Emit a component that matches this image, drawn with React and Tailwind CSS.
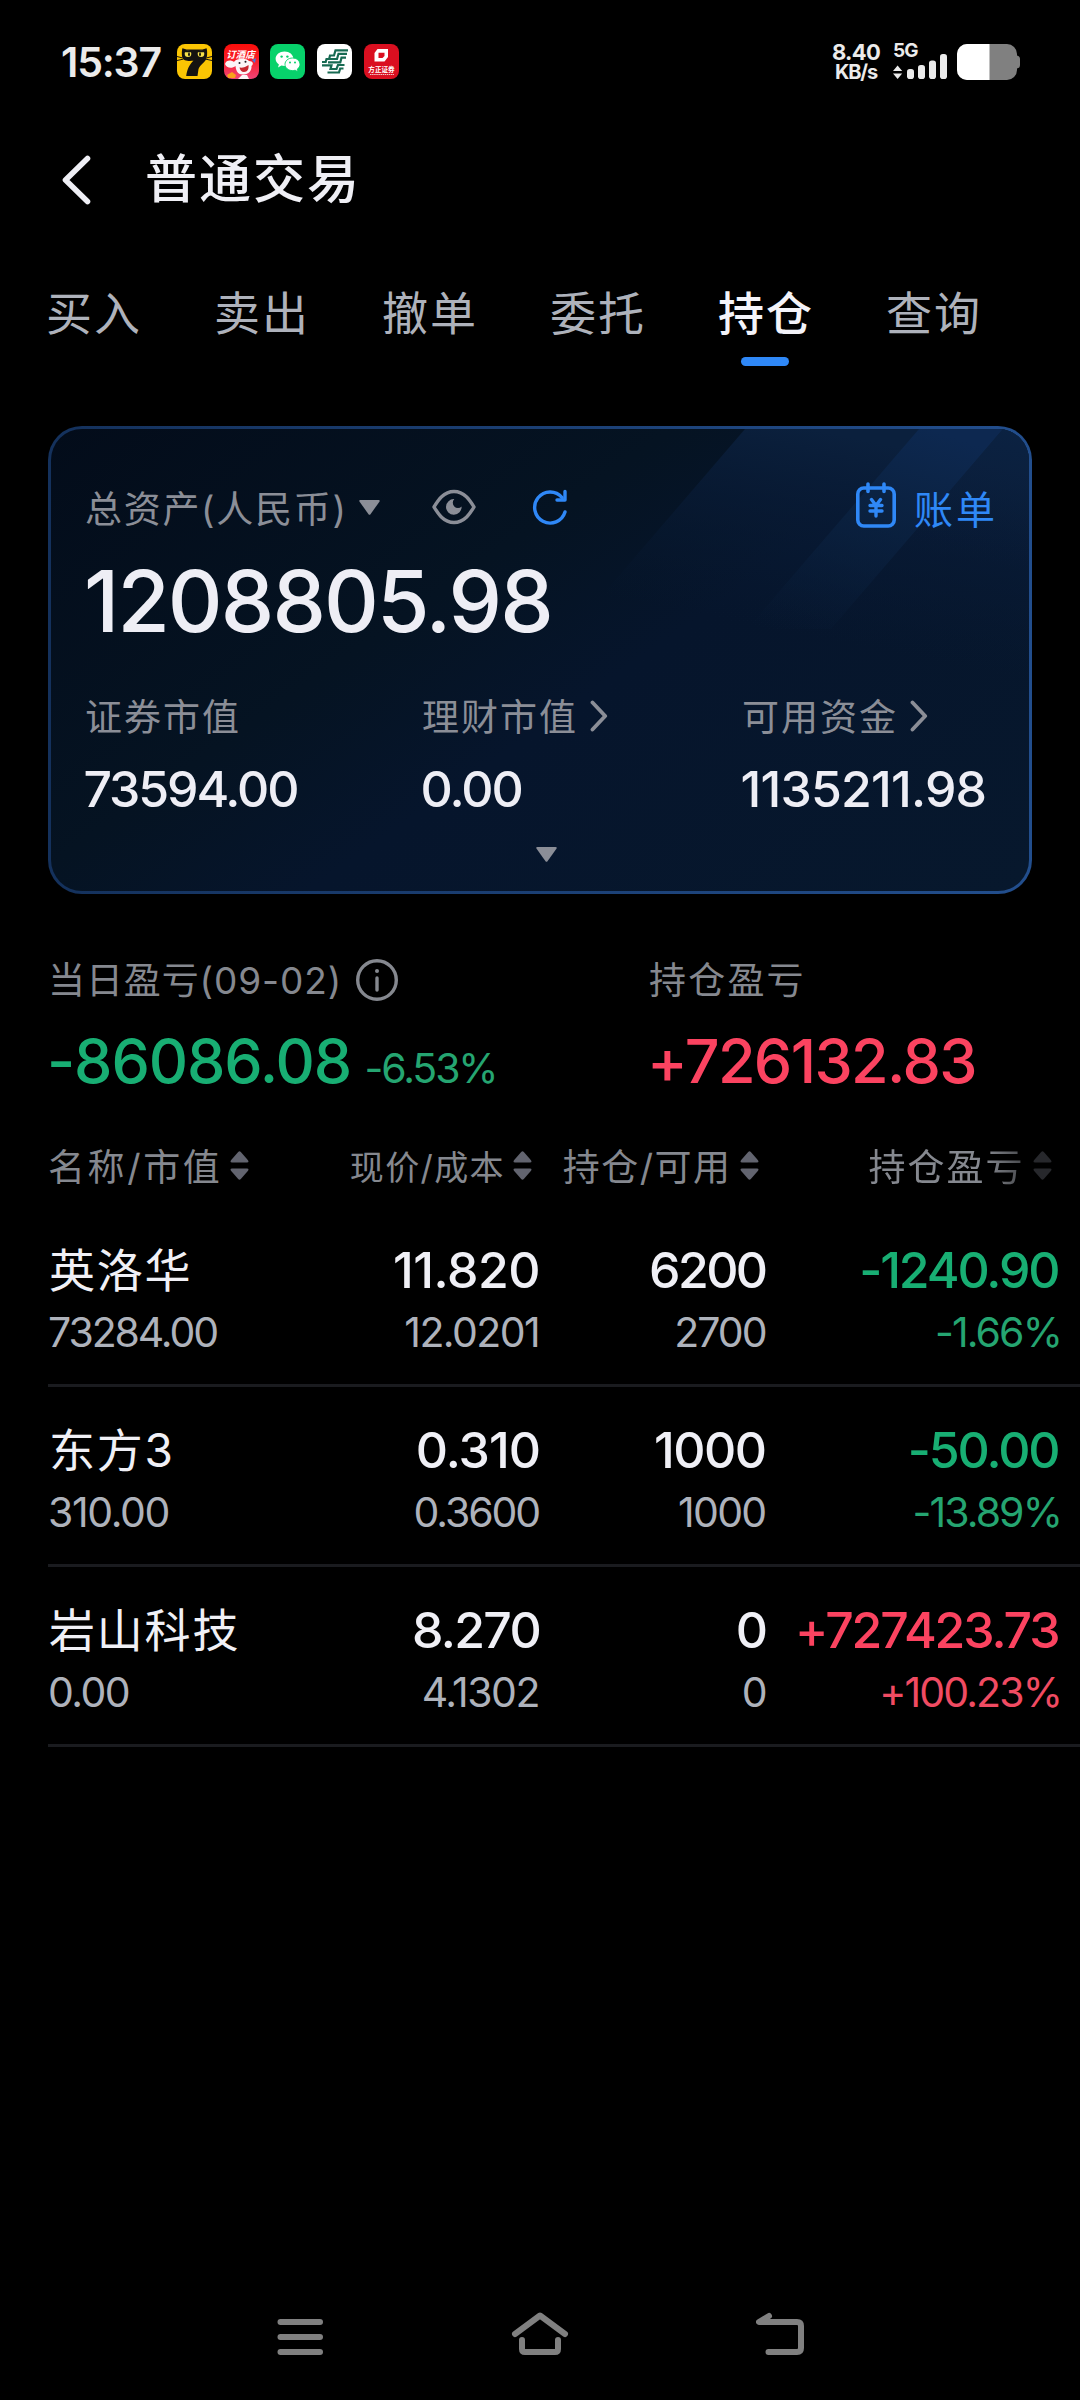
import React from "react";

/* ---------- status bar ---------- */

function CatAppIcon() {
  return (
    <svg width="35" height="35" viewBox="0 0 35 35">
      <rect width="35" height="35" rx="8" fill="#fbc503" />
      <path d="M5.200 13.500C4.600 9.500 4.800 6.500 5.400 4.200L9.500 5.500H25.500L29.600 4.200C30.200 6.500 30.400 9.500 29.800 13.500C28.500 18.500 23.500 20 21.500 25L20.500 32H9.200C10 26 12.500 20 16.500 16.800C11 17.200 6.200 17 5.200 13.500Z" fill="#141210" />
      <path d="M0 12.500L5 13.800M0 16.500L6 15.200M35 12.500L30 13.800M35 16.500L29 15.200" stroke="#141210" strokeWidth="1" />
      <circle cx="11" cy="9.800" r="3.300" fill="#f5e04a" />
      <circle cx="24" cy="9.800" r="3.300" fill="#f5e04a" />
      <path d="M7 7.200H14.500M20.500 7.200H28" stroke="#141210" strokeWidth="2" />
      <ellipse cx="12" cy="10.300" rx="0.900" ry="2" fill="#141210" />
      <ellipse cx="23" cy="10.300" rx="0.900" ry="2" fill="#141210" />
    </svg>
  );
}

function HotelAppIcon() {
  return (
    <svg width="35" height="35" viewBox="0 0 35 35">
      <defs>
        <linearGradient id="hotel" x1="0" y1="0" x2="0" y2="1">
          <stop offset="0" stopColor="#fb0d0a" />
          <stop offset="0.5" stopColor="#f8202c" />
          <stop offset="1" stopColor="#f0457a" />
        </linearGradient>
        <clipPath id="hotelClip"><rect width="35" height="35" rx="8" /></clipPath>
      </defs>
      <g clipPath="url(#hotelClip)">
        <rect width="35" height="35" fill="url(#hotel)" />
        <path d="M1 20C2 16 7 15.500 10 18C12 14.500 22 13.500 25 17C29 17 30 20 27.500 22C28 27 24 31 19 30.500C14 30.500 12 27 11.500 22C8 25 2 24 1 20Z" fill="#fbf5f7" />
        <path d="M15.500 23.500C18.500 24 22 23 24.500 21C25 25 23.500 28 20 28C17.500 28 16 26 15.500 23.500Z" fill="#c8262f" />
        <circle cx="15.500" cy="19" r="1" fill="#221f25" />
        <circle cx="21.500" cy="17.800" r="1" fill="#221f25" />
        <path d="M28 16L32 14L31 19Z" fill="#4e79d8" />
        <path d="M3 31L8 28L12 31L11 34H4Z" fill="#f8a21d" />
        <path d="M14 35L18 31H23L25 35Z" fill="#fbf5f7" />
        <text x="16.500" y="13.500" textAnchor="middle" fontSize="9.500" fontWeight="700" fontStyle="italic" fontFamily="Noto Sans CJK SC" fill="#fff">订酒店</text>
      </g>
    </svg>
  );
}

function WeChatIcon() {
  return (
    <svg width="35" height="35" viewBox="0 0 35 35">
      <rect width="35" height="35" rx="8" fill="#07d26b" />
      <path d="M14.500 7.500C9.600 7.500 5.600 10.700 5.600 14.800C5.600 17.100 6.900 19.100 8.900 20.500L8 23.500L11.400 21.600C12.400 21.900 13.400 22 14.500 22C19.400 22 23.400 18.900 23.400 14.800C23.400 10.700 19.400 7.500 14.500 7.500Z" fill="#fff" />
      <path d="M22.500 14C18.300 14 15 16.800 15 20.300C15 23.800 18.300 26.600 22.500 26.600C23.400 26.600 24.300 26.500 25.100 26.200L28 27.800L27.300 25.100C29 24 30 22.300 30 20.300C30 16.800 26.700 14 22.500 14Z" fill="#fff" stroke="#07d26b" strokeWidth="0.900" />
      <circle cx="11.600" cy="12.600" r="1.200" fill="#07d26b" />
      <circle cx="17.400" cy="12.600" r="1.200" fill="#07d26b" />
      <circle cx="20" cy="18.600" r="1" fill="#07d26b" />
      <circle cx="25" cy="18.600" r="1" fill="#07d26b" />
    </svg>
  );
}

function PostalBankIcon() {
  return (
    <svg width="35" height="35" viewBox="0 0 35 35">
      <rect width="35" height="35" rx="8" fill="#fff" />
      <g fill="none" stroke="#176a52" strokeWidth="2.200">
        <path d="M31 6.300H18.500L17 11.500H13L12 15.500" />
        <path d="M30 9.800H21.500L20 15H9.500L8.700 18H5" />
        <path d="M29 13.700H24.500L23.300 18.400H11" />
        <path d="M5 21.300H14.500L13.500 25H19.500L21 21H27.500" />
        <path d="M10.500 28.500H22L23.200 24.500H26.500" />
      </g>
    </svg>
  );
}

function FounderIcon() {
  return (
    <svg width="35" height="35" viewBox="0 0 35 35">
      <rect width="35" height="35" rx="8" fill="#da0f20" />
      <path d="M13.500 5H24V13L20.500 17.500H10.500V9Z" fill="#fff" />
      <path d="M14.500 8.800H20.500V12L18.500 14H14.500Z" fill="#da0f20" />
      <text x="17.500" y="28" textAnchor="middle" fontSize="6.600" fontWeight="700" fontFamily="Noto Sans CJK SC" fill="#fff">方正证券</text>
      <path d="M6 30.500H30" stroke="#fff" strokeWidth="1" strokeDasharray="1.500 0.600" opacity="0.75" />
    </svg>
  );
}

function StatusBar() {
  return (
    <div className="flex h-[123px] shrink-0 items-center pl-[61px] pr-[60px] text-[#ebebeb]">
      <div className="w-[116px] text-[41px] font-semibold leading-[50px] tracking-[-1.2px]">15:37</div>
      <div className="flex gap-[11.7px]">
        <CatAppIcon />
        <HotelAppIcon />
        <WeChatIcon />
        <PostalBankIcon />
        <FounderIcon />
      </div>
      <div className="ml-auto w-[50px] whitespace-nowrap text-center font-bold leading-[20px]">
        <div className="text-[22px] tracking-[-0.7px]">8.40</div>
        <div className="text-[20px] tracking-[-1.1px]">KB/s</div>
      </div>
      <div className="ml-[12px] h-[35px] w-[55px]">
        <div className="h-[14px] text-[19px] font-bold leading-[14px] tracking-[-1px]">5G</div>
        <svg className="-mt-[4px]" width="55" height="25" viewBox="0 0 55 25" fill="#ebebeb">
          <path d="M0 17L4.600 11.500L9.200 17ZM0 19.500H9.200L4.600 25Z" />
          <rect x="14" y="15" width="7" height="10" rx="2.800" />
          <rect x="25" y="11" width="7" height="14" rx="2.800" />
          <rect x="36" y="6.500" width="7" height="18.500" rx="2.800" />
          <rect x="47" y="0" width="7" height="25" rx="2.800" />
        </svg>
      </div>
      <svg className="ml-[9px]" width="63" height="36" viewBox="0 0 63 36">
        <path d="M10 0H50A10 10 0 0 1 60 10V11.500Q63 12 63 15V21Q63 24 60 24.500V26A10 10 0 0 1 50 36H10A10 10 0 0 1 0 26V10A10 10 0 0 1 10 0Z" fill="#808080" />
        <path d="M10 0H32.500V36H10A10 10 0 0 1 0 26V10A10 10 0 0 1 10 0Z" fill="#fff" />
      </svg>
    </div>
  );
}

/* ---------- title and tabs ---------- */

function TitleBar() {
  return (
    <div className="flex h-[114px] shrink-0 items-center pl-[60px] text-[#efeff5]">
      <svg width="33" height="54" viewBox="0 0 33 54" fill="none" stroke="currentColor" strokeWidth="5.600" strokeLinecap="round" strokeLinejoin="round">
        <path d="M27.500 5.500L5.500 27L27.500 48.500" />
      </svg>
      <h1 className="ml-[52px] text-[52px] font-medium leading-[60px] tracking-[2px]">普通交易</h1>
    </div>
  );
}

const TABS = ["买入", "卖出", "撤单", "委托", "持仓", "查询"];

function Tabs({ active }) {
  return (
    <nav className="flex h-[153px] shrink-0 pl-[10px] text-[46px] tracking-[2px]">
      {TABS.map((t) => (
        <div
          key={t}
          className={
            t === active
              ? "relative flex w-[168px] items-center justify-center font-medium text-[#f3f3f9]"
              : "flex w-[168px] items-center justify-center text-[#aeb2bb]"
          }
        >
          {t}
          {t === active && (
            <span className="absolute bottom-[24px] left-[59px] h-[9px] w-[48px] rounded-full bg-[#2f88f7]" />
          )}
        </div>
      ))}
    </nav>
  );
}

/* ---------- asset card ---------- */

function DownTriangle({ className }) {
  return (
    <svg className={className} width="21" height="15" viewBox="0 0 21 15" fill="#8b8e97">
      <path d="M1.500 0H19.500Q21.500 0 20.400 1.700L11.500 14.200Q10.500 15.500 9.500 14.200L0.600 1.700Q-0.500 0 1.500 0Z" />
    </svg>
  );
}

function RightChevron({ className }) {
  return (
    <svg className={className} width="18" height="32" viewBox="0 0 18 32" fill="none" stroke="#8b8e97" strokeWidth="3.800" strokeLinecap="round" strokeLinejoin="round">
      <path d="M2.500 2.500L15.200 16L2.500 29.500" />
    </svg>
  );
}

const ASSETS = [
  { label: "证券市值", value: "73594.00", link: false, tracking: "tracking-[-2.15px]" },
  { label: "理财市值", value: "0.00", link: true, tracking: "tracking-[-2px]" },
  { label: "可用资金", value: "1135211.98", link: true, tracking: "tracking-[-0.8px]" },
];

function AssetCard() {
  return (
    <section className="mx-[48px] mt-[36px] h-[468px] shrink-0 rounded-[34px] bg-linear-to-r from-[#14315c] to-[#224e8d] p-[3px]">
      <div className="relative h-full overflow-hidden rounded-[31px] bg-[linear-gradient(145deg,#030c1a_0%,#051322_38%,#06152c_56%,#07182d_100%)]">
        <svg className="absolute inset-0" width="978" height="462" viewBox="0 0 978 462">
          <defs>
            <linearGradient id="bandA" gradientUnits="userSpaceOnUse" x1="760" y1="0" x2="720" y2="200">
              <stop offset="0" stopColor="#0b203d" />
              <stop offset="0.4" stopColor="#091c38" stopOpacity="0.65" />
              <stop offset="1" stopColor="#081a34" stopOpacity="0" />
            </linearGradient>
            <linearGradient id="bandB" gradientUnits="userSpaceOnUse" x1="880" y1="0" x2="800" y2="230">
              <stop offset="0" stopColor="#0d2850" />
              <stop offset="0.4" stopColor="#0b2343" stopOpacity="0.8" />
              <stop offset="1" stopColor="#0a1f3c" stopOpacity="0" />
            </linearGradient>
            <linearGradient id="bandC" gradientUnits="userSpaceOnUse" x1="960" y1="0" x2="930" y2="130">
              <stop offset="0" stopColor="#0b2242" />
              <stop offset="1" stopColor="#0a1c38" stopOpacity="0" />
            </linearGradient>
          </defs>
          <path d="M694 0H978V462H297Z" fill="url(#bandA)" />
          <path d="M868 0H952L780 200L696 200Z" fill="url(#bandB)" />
          <path d="M952 0H978V200H780Z" fill="url(#bandC)" />
        </svg>
        <div className="relative pl-[34px] pt-[51px]">
          <div className="flex h-[60px] items-center">
            <span className="text-[37px] leading-[60px] tracking-[1.7px] text-[#8b8e97]">总资产(人民币)</span>
            <DownTriangle className="mb-[6px] ml-[11px]" />
            <svg className="mb-[6px] ml-[52px]" width="44" height="36" viewBox="0 0 44 36">
              <path d="M2 18C6 11.500 11.500 2.500 22 2.500S38 11.500 42 18C38 24.500 32.500 33.500 22 33.500S6 24.500 2 18Z" fill="none" stroke="#8b8e97" strokeWidth="3.400" strokeLinejoin="round" />
              <path d="M22.300 10.100A7.800 7.800 0 1 0 29.600 17.400A4.900 4.900 0 0 1 22.300 10.100Z" fill="#8b8e97" />
            </svg>
            <svg className="mb-[6px] ml-[56px]" width="36" height="36" viewBox="0 0 36 36" fill="none" stroke="#2f88f7" strokeWidth="3.400" strokeLinecap="round" strokeLinejoin="round">
              <path d="M33 23A15.500 15.500 0 1 1 30 8.500" />
              <path d="M33 2.500V11H25" />
            </svg>
            <div className="ml-auto flex items-center pr-[31px]">
              <svg className="mb-[10px] mr-[18px]" width="40" height="46" viewBox="0 0 40 46" fill="none" stroke="#2f88f7" strokeWidth="3.600" strokeLinecap="round" strokeLinejoin="round">
                <rect x="1.800" y="6" width="36.400" height="38" rx="6" />
                <path d="M12 2V9.500M28 2V9.500" />
                <path d="M15.500 17.500L20 23.500L24.500 17.500M14 23.500H26M14 29H26M20 23.500V34" strokeWidth="3.400" />
              </svg>
              <span className="text-[39px] leading-[60px] tracking-[3px] text-[#2f88f7]">账单</span>
            </div>
          </div>
          <div className="-ml-[1px] h-[123px] text-[85px] font-medium leading-[124px] tracking-[-1.9px] text-[#eeeef5]">1208805.98</div>
          <div className="mt-[30px] grid grid-cols-[337px_320px_1fr]">
            {ASSETS.map((a) => (
              <div key={a.label}>
                <div className="flex h-[50px] items-center text-[37px] leading-[50px] tracking-[2px] text-[#8b8e97]">
                  {a.label}
                  {a.link && <RightChevron className="mb-[4px] ml-[11.500px]" />}
                </div>
                <div className="-ml-[1.500px] h-[91px] text-[50px] font-medium leading-[92px] text-[#eeeef5]">
                  <span className={a.tracking}>{a.value}</span>
                </div>
              </div>
            ))}
          </div>
          <DownTriangle className="ml-[450.500px] mt-[13px]" />
        </div>
      </div>
    </section>
  );
}

/* ---------- profit summary ---------- */

function ProfitSummary() {
  return (
    <section className="mt-[62px] grid shrink-0 grid-cols-[599px_1fr] pl-[50px]">
      <div>
        <div className="flex h-[49px] items-center text-[37px] leading-[49px] text-[#85888f]">
          <span className="-ml-[2px] tracking-[0.9px]">当日盈亏(09-02)</span>
          <svg className="mb-[1px] ml-[14px]" width="42" height="42" viewBox="0 0 42 42" fill="none" stroke="#85888f">
            <circle cx="21" cy="21" r="19.300" strokeWidth="3.400" />
            <path d="M21 19V31" strokeWidth="3.400" strokeLinecap="round" />
            <circle cx="21" cy="12" r="2" fill="#85888f" stroke="none" />
          </svg>
        </div>
        <div className="-ml-[3px] h-[112px] whitespace-nowrap text-[61px] font-medium leading-[112px] tracking-[-1.1px] text-[#18ae73]">
          -86086.08
          <span className="ml-[13.500px] text-[41px] font-normal leading-none tracking-[-2.1px] text-[#25a571]">-6.53%</span>
        </div>
      </div>
      <div>
        <div className="h-[49px] text-[37px] leading-[49px] tracking-[2.200px] text-[#85888f]">持仓盈亏</div>
        <div className="-ml-[2px] h-[112px] text-[61px] font-medium leading-[112px] tracking-[-1.600px] text-[#fb4360]">+726132.83</div>
      </div>
    </section>
  );
}

/* ---------- holdings table ---------- */

function SortArrows() {
  return (
    <svg className="mb-[6px] ml-[8px] shrink-0" width="19" height="29" viewBox="0 0 19 29" fill="#62646f">
      <path d="M8.200 1Q9.500 -0.300 10.800 1L18 9.200Q19.300 11.300 17 11.500H2Q-0.300 11.300 1 9.200Z" />
      <path d="M8.200 28Q9.500 29.300 10.800 28L18 19.800Q19.300 17.700 17 17.500H2Q-0.300 17.700 1 19.800Z" />
    </svg>
  );
}

const GRID = "grid grid-cols-[252px_239px_226.5px_293px]";

function TableHead() {
  return (
    <div className="shrink-0 pl-[48px]">
      <div className={GRID + " h-[90px] pt-[12px] text-[37px] leading-[50px] whitespace-nowrap text-[#85888f]"}>
        <div className="flex items-center">
          <span className="tracking-[2.600px]">名称/市值</span>
          <SortArrows />
        </div>
        <div className="flex items-center justify-end pr-[7px]">
          <span className="text-[34px] tracking-[1.400px]">现价/成本</span>
          <SortArrows />
        </div>
        <div className="flex items-center justify-end pr-[7px]">
          <span className="tracking-[1.500px]">持仓/可用</span>
          <SortArrows />
        </div>
        <div className="flex items-center justify-end pr-[7px]">
          <div className="flex items-center [mask-image:linear-gradient(to_right,#000_64%,#0006_90%,#0006)]">
            <span className="tracking-[2px]">持仓盈亏</span>
            <SortArrows />
          </div>
        </div>
      </div>
    </div>
  );
}

const GREEN = ["text-[#18ae73]", "text-[#25a571]"];
const RED = ["text-[#fb4360]", "text-[#f04b62]"];

const HOLDINGS = [
  {
    name: "英洛华", value: "73284.00", valueT: "tracking-[-2.1px]",
    price: "11.820", priceT: "tracking-[-0.5px]", cost: "12.0201", costT: "tracking-[-1.6px]",
    held: "6200", heldT: "tracking-[-2.6px]", usable: "2700", usableT: "tracking-[-2px]",
    profit: "-1240.90", pct: "-1.66%", color: GREEN,
  },
  {
    name: "东方3", value: "310.00", valueT: "tracking-[-1.4px]",
    price: "0.310", priceT: "tracking-[-1px]", cost: "0.3600", costT: "tracking-[-2.1px]",
    held: "1000", heldT: "tracking-[-1.5px]", usable: "1000", usableT: "tracking-[-1.7px]",
    profit: "-50.00", pct: "-13.89%", color: GREEN,
  },
  {
    name: "岩山科技", value: "0.00", valueT: "tracking-[-1.6px]",
    price: "8.270", priceT: "tracking-[-1.7px]", cost: "4.1302", costT: "tracking-[-1.5px]",
    held: "0", heldT: "tracking-[-2.5px]", usable: "0", usableT: "tracking-[-2px]",
    profit: "+727423.73", pct: "+100.23%", color: RED,
  },
];

function HoldingRow({ h }) {
  return (
    <div className={GRID + " ml-[48px] h-[180px] shrink-0 whitespace-nowrap border-b-[3px] border-[#1a1b1f] pt-[38px] text-[#f0f0f6]"}>
      <div>
        <div className="ml-[1px] h-[50px] text-[46px] leading-[50px] tracking-[1.8px]">{h.name}</div>
        <div className="h-[74px] text-[41px] leading-[74px] text-[#aeb2bb]"><span className={h.valueT}>{h.value}</span></div>
      </div>
      <div className="-mr-[1px] text-right">
        <div className="h-[50px] text-[50px] font-medium leading-[50px]"><span className={h.priceT}>{h.price}</span></div>
        <div className="mr-[1px] h-[74px] text-[41px] leading-[74px] text-[#aeb2bb]"><span className={h.costT}>{h.cost}</span></div>
      </div>
      <div className="text-right">
        <div className="h-[50px] text-[50px] font-medium leading-[50px]"><span className={h.heldT}>{h.held}</span></div>
        <div className="h-[74px] text-[41px] leading-[74px] text-[#aeb2bb]"><span className={h.usableT}>{h.usable}</span></div>
      </div>
      <div className="text-right">
        <div className={"h-[50px] text-[50px] font-medium leading-[50px] tracking-[-2.1px] " + h.color[0]}>{h.profit}</div>
        <div className={"-mr-[2.500px] h-[74px] text-[41px] leading-[74px] tracking-[-1.900px] " + h.color[1]}>{h.pct}</div>
      </div>
    </div>
  );
}

/* ---------- system navigation ---------- */

function SystemNav() {
  return (
    <div className="mt-auto flex h-[126px] shrink-0 items-center pl-[277px]">
      <svg width="46" height="54" viewBox="0 0 46 54" fill="#808080">
        <rect x="0.500" y="9" width="45.500" height="6" rx="3" />
        <rect x="0.500" y="24" width="45.500" height="6" rx="3" />
        <rect x="0.500" y="39" width="45.500" height="6" rx="3" />
      </svg>
      <svg className="ml-[188px]" width="58" height="54" viewBox="0 0 58 54" fill="none" stroke="#808080" strokeWidth="6" strokeLinecap="round" strokeLinejoin="round">
        <path d="M4 24L29 5.500L54 24" />
        <path d="M11 30V39Q11 42 14 42H44Q47 42 47 39V30" />
      </svg>
      <svg className="ml-[187px]" width="48" height="54" viewBox="0 0 48 54" fill="none" stroke="#808080" strokeWidth="6" strokeLinecap="round" strokeLinejoin="round">
        <path d="M13 6L3 12H41Q45 12 45 16V38Q45 42 41 42H12.500" />
      </svg>
    </div>
  );
}

export default function App() {
  return (
    <div className='flex h-[2400px] w-[1080px] flex-col overflow-hidden bg-black font-["Inter","Noto_Sans_CJK_SC",sans-serif]'>
      <StatusBar />
      <TitleBar />
      <Tabs active="持仓" />
      <AssetCard />
      <ProfitSummary />
      <TableHead />
      {HOLDINGS.map((h) => (
        <HoldingRow key={h.name} h={h} />
      ))}
      <SystemNav />
    </div>
  );
}
